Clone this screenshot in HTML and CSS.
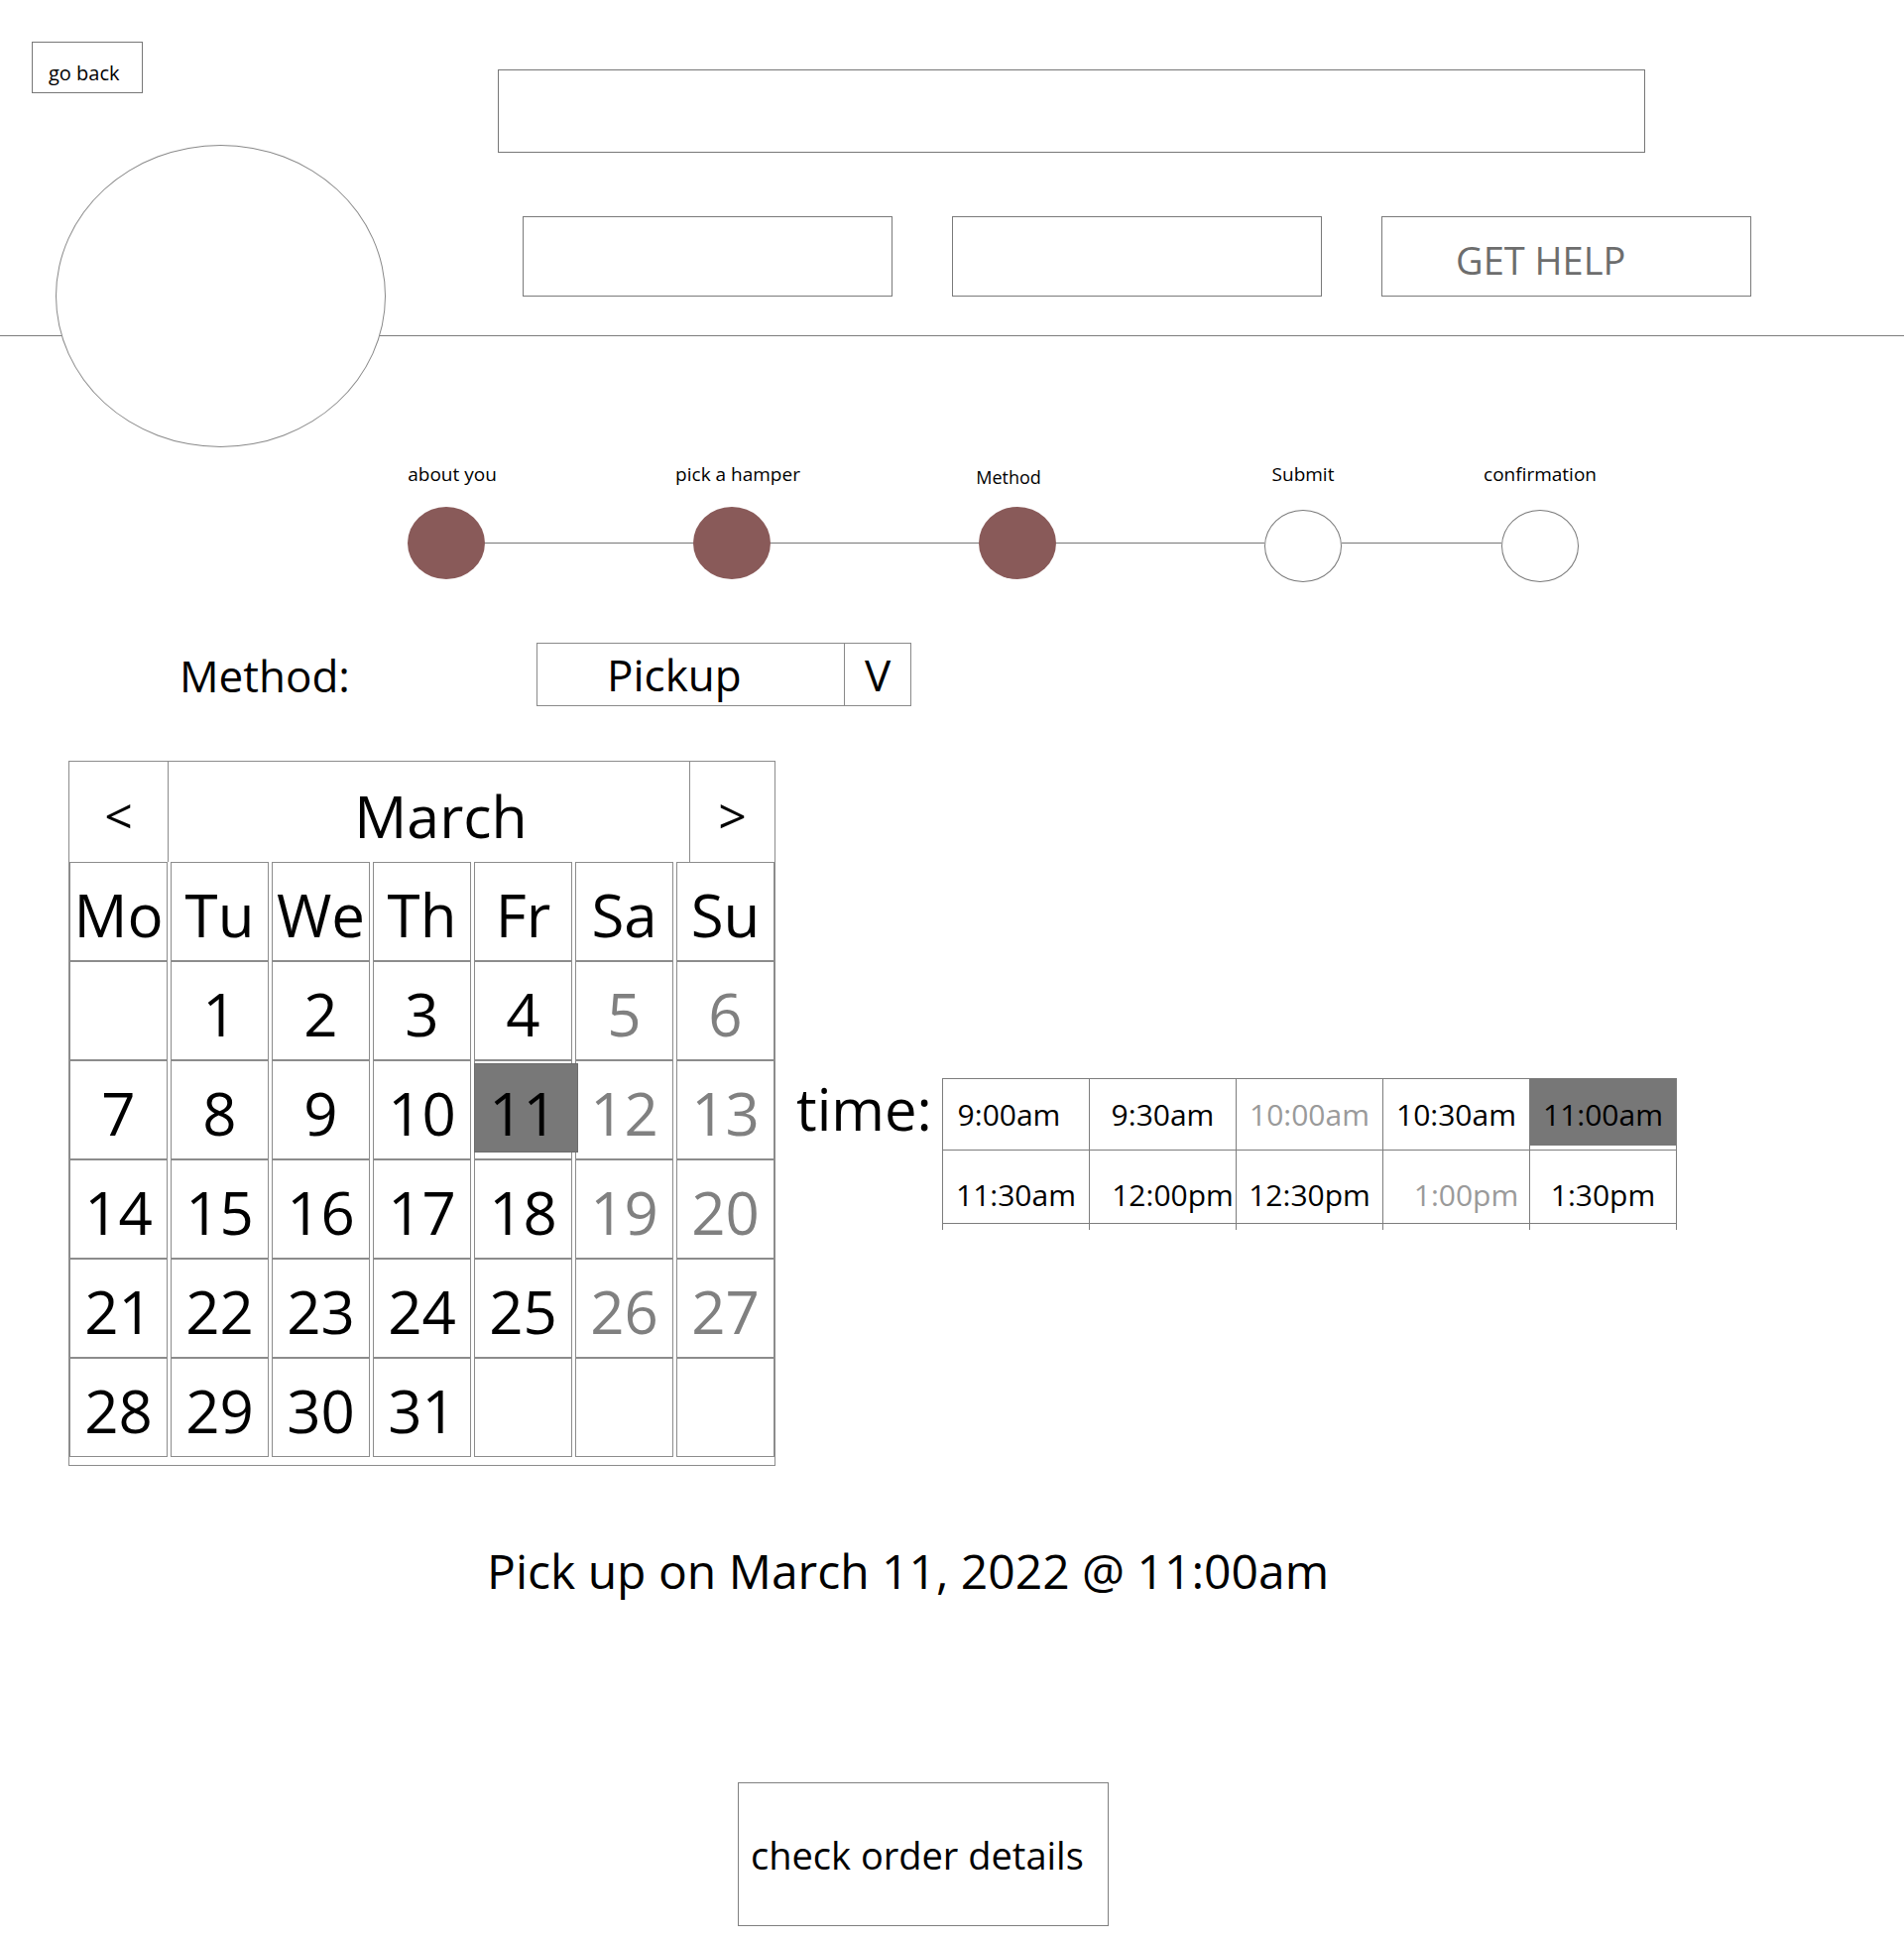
FILE: index.html
```html
<!DOCTYPE html>
<html lang="en">

<head>
    <meta charset="UTF-8">
    <meta name="viewport" content="width=device-width, initial-scale=1.0">
    <title>Hamper Order - Method</title>
    <link rel="stylesheet" href="styles.css">
</head>

<body>
    <header class="topbar">
        <div class="brand">
            <button class="back-btn">go back</button>
            <div class="logo"></div>
        </div>
        <div class="top-right">
            <div class="search"></div>
            <nav class="nav">
                <a class="nav-btn"></a>
                <a class="nav-btn"></a>
                <a class="nav-btn help">GET HELP</a>
            </nav>
        </div>
    </header>

    <!-- progress -->
    <div class="steps">
        <div class="step done">
            <span class="step-label shift">about you</span>
            <span class="dot"></span>
        </div>
        <div class="link"></div>
        <div class="step done">
            <span class="step-label shift">pick a hamper</span>
            <span class="dot"></span>
        </div>
        <div class="link"></div>
        <div class="step done">
            <span class="step-label lower">Method</span>
            <span class="dot"></span>
        </div>
        <div class="link"></div>
        <div class="step">
            <span class="step-label">Submit</span>
            <span class="dot"></span>
        </div>
        <div class="link short"></div>
        <div class="step">
            <span class="step-label">confirmation</span>
            <span class="dot"></span>
        </div>
    </div>

    <div class="method-row">
        <label class="method-label">Method:</label>
        <div class="select">
            <span class="select-value">Pickup</span>
            <span class="select-arrow">V</span>
        </div>
    </div>

    <div class="schedule">
        <div class="calendar">
            <div class="cal-head">
                <div class="cal-nav">&lt;</div>
                <div class="cal-month">March</div>
                <div class="cal-nav">&gt;</div>
            </div>
            <div class="cal-grid">
                <div class="cell">Mo</div>
                <div class="cell">Tu</div>
                <div class="cell">We</div>
                <div class="cell">Th</div>
                <div class="cell">Fr</div>
                <div class="cell">Sa</div>
                <div class="cell">Su</div>

                <div class="cell"></div>
                <div class="cell">1</div>
                <div class="cell">2</div>
                <div class="cell">3</div>
                <div class="cell">4</div>
                <div class="cell off">5</div>
                <div class="cell off">6</div>

                <div class="cell">7</div>
                <div class="cell">8</div>
                <div class="cell">9</div>
                <div class="cell">10</div>
                <div class="cell sel">11</div>
                <div class="cell off">12</div>
                <div class="cell off">13</div>

                <div class="cell">14</div>
                <div class="cell">15</div>
                <div class="cell">16</div>
                <div class="cell">17</div>
                <div class="cell">18</div>
                <div class="cell off">19</div>
                <div class="cell off">20</div>

                <div class="cell">21</div>
                <div class="cell">22</div>
                <div class="cell">23</div>
                <div class="cell">24</div>
                <div class="cell">25</div>
                <div class="cell off">26</div>
                <div class="cell off">27</div>

                <div class="cell">28</div>
                <div class="cell">29</div>
                <div class="cell">30</div>
                <div class="cell">31</div>
                <div class="cell"></div>
                <div class="cell"></div>
                <div class="cell"></div>
            </div>
        </div>

        <div class="times">
            <div class="time-label">time:</div>
            <div class="slots">
                <div class="slot nudge-left">9:00am</div>
                <div class="slot">9:30am</div>
                <div class="slot off">10:00am</div>
                <div class="slot">10:30am</div>
                <div class="slot sel">11:00am</div>

                <div class="slot late">11:30am</div>
                <div class="slot late nudge-right">12:00pm</div>
                <div class="slot late">12:30pm</div>
                <div class="slot late off nudge-right">1:00pm</div>
                <div class="slot late">1:30pm</div>

                <div class="stub"></div>
                <div class="stub"></div>
                <div class="stub"></div>
                <div class="stub"></div>
                <div class="stub"></div>
            </div>
        </div>
    </div>

    <p class="summary">Pick up on March 11, 2022 @ 11:00am</p>

    <button class="check-btn">check order details</button>
</body>

</html>
```

FILE: styles.css
```css
body {
    margin: 0;
    padding: 0;
    background: #fff;
    color: #000;
    font-family: "Open Sans", "Noto Sans", sans-serif;
    min-height: 1958px;
}

/* top bar */
.topbar {
    display: flex;
    height: 338px;
    border-bottom: 1px solid #7d7d7d;
}

.brand {
    width: 502px;
    flex-shrink: 0;
}

.back-btn {
    display: flex;
    align-items: center;
    box-sizing: border-box;
    width: 112px;
    height: 52px;
    margin: 42px 0 0 32px;
    padding: 10px 0 0 16px;
    border: 1px solid #777;
    background: #fff;
    font-family: inherit;
    font-size: 20px;
    color: #000;
}

.logo {
    position: relative;
    z-index: 1;
    width: 333px;
    height: 305px;
    margin: 52px 0 0 56px;
    box-sizing: border-box;
    border: 1px solid #8a8a8a;
    border-radius: 50%;
    background: #fff;
}

.top-right {
    padding-top: 70px;
}

.search {
    width: 1157px;
    height: 84px;
    box-sizing: border-box;
    border: 1px solid #777;
}

.nav {
    display: flex;
    gap: 60px;
    margin: 64px 0 0 25px;
}

.nav-btn {
    display: flex;
    align-items: center;
    width: 373px;
    height: 81px;
    box-sizing: border-box;
    border: 1px solid #7a7a7a;
}

.help {
    padding: 6px 0 0 74px;
    font-size: 38px;
    color: #6d6d6d;
}

/* progress steps */
.steps {
    display: flex;
    align-items: flex-start;
    margin: 128px 0 0 411px;
}

.step {
    display: flex;
    flex-direction: column;
    align-items: center;
    width: 78px;
}

.step-label {
    font-size: 19px;
    line-height: 22px;
    white-space: nowrap;
}

.step-label.shift {
    margin-left: 12px;
}

.step-label.lower {
    margin: 3px 18px -3px 0;
    font-size: 18px;
}

.dot {
    width: 78px;
    height: 73px;
    margin-top: 22px;
    box-sizing: border-box;
    border: 1px solid #7a7a7a;
    border-radius: 50%;
    background: #fff;
}

.done .dot {
    margin-top: 22px;
    border: none;
    background: #895a59;
}

.step:not(.done) .dot {
    margin-top: 25px;
}

.link {
    width: 210px;
    height: 1px;
    margin-top: 80px;
    background: #777;
}

.link.short {
    width: 161px;
}

/* method */
.method-row {
    display: flex;
    align-items: center;
    margin: 61px 0 0 181px;
}

.method-label {
    width: 360px;
    font-size: 44px;
    padding-top: 2px;
}

.select {
    display: flex;
    width: 378px;
    height: 64px;
    box-sizing: border-box;
    border: 1px solid #8a8a8a;
    font-size: 44px;
    line-height: 58px;
}

.select-value {
    flex: 1;
    padding: 2px 0 0 70px;
}

.select-arrow {
    width: 66px;
    padding-top: 2px;
    text-align: center;
    border-left: 1px solid #8a8a8a;
}

/* calendar + times */
.schedule {
    display: flex;
    align-items: flex-start;
    margin: 55px 0 0 69px;
}

.calendar {
    width: 713px;
    box-sizing: border-box;
    border: 1px solid #8c8c8c;
    padding-bottom: 8px;
}

.cal-head {
    display: grid;
    grid-template-columns: 100px 526px 85px;
    height: 101px;
}

.cal-head > div {
    display: flex;
    align-items: center;
    justify-content: center;
    box-sizing: border-box;
}

.cal-nav {
    font-size: 50px;
    padding-top: 6px;
}

.cal-head > div:not(:last-child) {
    border-right: 1px solid #8c8c8c;
}

.cal-month {
    font-size: 59px;
    padding: 7px 0 0 24px;
}

.cal-grid {
    display: grid;
    grid-template-columns: repeat(7, 99px);
    grid-auto-rows: 100px;
    column-gap: 3px;
}

.cell {
    display: flex;
    align-items: center;
    justify-content: center;
    box-sizing: border-box;
    border: 1px solid #8c8c8c;
    padding-top: 6px;
    font-size: 60px;
}

.cell.off {
    color: #808080;
}

.cell.sel {
    position: relative;
    z-index: 0;
}

.cell.sel::before {
    content: "";
    position: absolute;
    z-index: -1;
    left: -1px;
    top: 2px;
    width: 105px;
    height: 90px;
    box-sizing: border-box;
    border: 1px solid #6c6c6c;
    background: #787878;
}

.times {
    display: flex;
    align-items: flex-start;
    margin: 320px 0 0 21px;
}

.time-label {
    width: 147px;
    margin-top: -9px;
    font-size: 58px;
}

.slots {
    display: grid;
    grid-template-columns: repeat(5, 148px);
    grid-template-rows: 72px 74px 6px;
    border-top: 1px solid #7d7d7d;
    border-left: 1px solid #7d7d7d;
}

.slot {
    position: relative;
    z-index: 0;
    display: flex;
    align-items: center;
    justify-content: center;
    box-sizing: border-box;
    border-right: 1px solid #7d7d7d;
    border-bottom: 1px solid #7d7d7d;
    font-size: 30px;
    white-space: nowrap;
}

.slot.late {
    padding-top: 16px;
}

.slot.nudge-left {
    padding-right: 14px;
}

.slot.nudge-right {
    padding-left: 20px;
}

.slot.off {
    color: #9a9a9a;
}

.slot.sel::before {
    content: "";
    position: absolute;
    z-index: -1;
    left: 0;
    top: -1px;
    right: 0;
    height: 68px;
    background: #777;
}

.stub {
    border-right: 1px solid #7d7d7d;
}

/* footer bits */
.summary {
    margin: 73px 0 0 491px;
    font-size: 48px;
}

.check-btn {
    display: block;
    width: 374px;
    height: 145px;
    margin: 181px 0 0 744px;
    padding: 0 0 0 12px;
    box-sizing: border-box;
    border: 1px solid #808080;
    background: #fff;
    text-align: left;
    font-family: inherit;
    font-size: 38px;
    color: #000;
}
```
